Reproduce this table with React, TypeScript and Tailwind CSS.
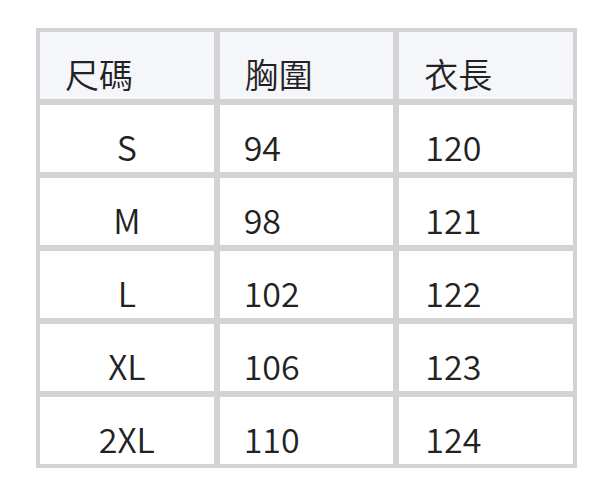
const header = ["尺碼", "胸圍", "衣長"];

const rows = [
  ["S", "94", "120"],
  ["M", "98", "121"],
  ["L", "102", "122"],
  ["XL", "106", "123"],
  ["2XL", "110", "124"],
];

export default function App() {
  return (
    <div className="w-[612px] h-[495px] bg-white pt-[28px] pl-[36px]">
      <div
        className="w-[541px] h-[440px] bg-[#d3d3d3] p-[4px] grid grid-cols-3 grid-rows-6 gap-[6px] text-[34px] leading-[46px] font-[350] text-[#222222]"
        style={{ fontFamily: '"Noto Sans CJK TC", "Noto Sans", sans-serif' }}
      >
        {header.map((h) => (
          <div key={h} className="bg-[#f5f6fa] flex items-end pl-[25px] pb-[2px]">
            {h}
          </div>
        ))}
        {rows.map((r) => (
          <>
            <div key={r[0]} className="bg-white flex items-end justify-center pb-[2px]">
              {r[0]}
            </div>
            <div key={r[0] + "b"} className="bg-white flex items-end pl-[24px] pb-[2px]">
              {r[1]}
            </div>
            <div key={r[0] + "c"} className="bg-white flex items-end pl-[26px] pb-[2px]">
              {r[2]}
            </div>
          </>
        ))}
      </div>
    </div>
  );
}
